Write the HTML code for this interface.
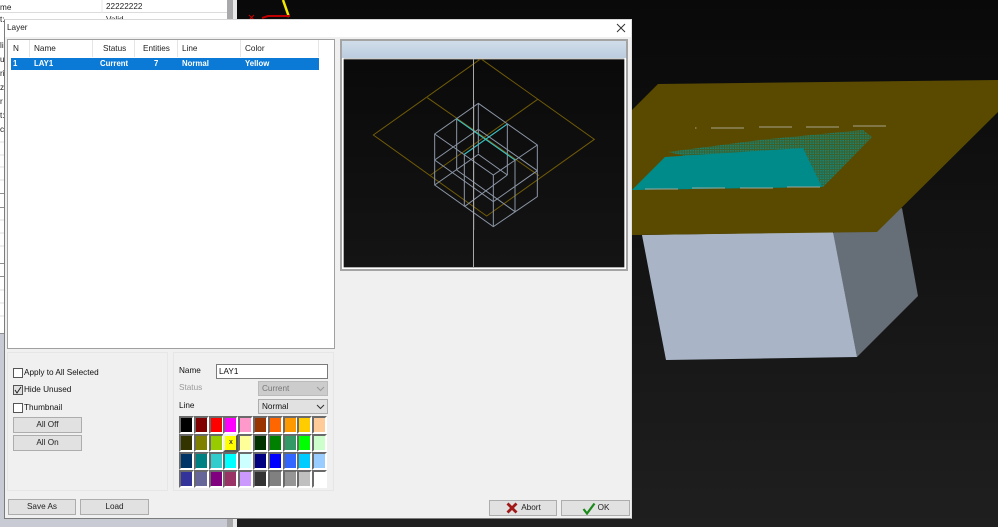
<!DOCTYPE html>
<html><head><meta charset="utf-8"><style>
html,body{margin:0;padding:0;width:998px;height:527px;overflow:hidden;background:#111}
*{box-sizing:border-box}
body{font-family:"Liberation Sans",sans-serif;font-size:8.2px;color:#111;position:relative}
#w{position:absolute;left:0;top:0;width:998px;height:527px;filter:blur(.3px)}
.a{position:absolute;white-space:nowrap}
.btn{position:absolute;background:#e1e1e1;border:1px solid #adadad;text-align:center;color:#222;font-size:8.2px}
.cb{position:absolute;width:10px;height:10px;background:#fff;border:1px solid #555}
.sel{position:absolute;border:1px solid #adadad;background:#e1e1e1;padding-left:3px;font-size:8.2px}
.sw{position:absolute;width:15px;height:18px;border:2px solid;border-color:#6a6a6a #fff #fff #6a6a6a}
.h{position:absolute;top:41px;height:16px;line-height:16px;font-size:8.2px;color:#222}
.r{position:absolute;top:58px;height:12px;line-height:12px;font-size:7.8px;font-weight:bold;color:#fff}
</style></head><body><div id="w">
<svg class="a" style="left:0;top:0" width="998" height="527" viewBox="0 0 998 527">
<defs>
<linearGradient id="bg" x1="0" y1="0" x2="0" y2="1"><stop offset="0" stop-color="#090909"/><stop offset="1" stop-color="#1f1f1f"/></linearGradient>
<linearGradient id="bg2" x1="0" y1="0" x2="0" y2="1"><stop offset="0" stop-color="#0a0a0a"/><stop offset="1" stop-color="#141414"/></linearGradient>
<pattern id="dots" width="2.500" height="2.500" patternUnits="userSpaceOnUse"><rect width="1.500" height="1.500" fill="#0a9090"/></pattern>
<linearGradient id="teal" x1="0" y1="1" x2="0.100" y2="0"><stop offset="0" stop-color="#008b8b"/><stop offset="1" stop-color="#2f6f40"/></linearGradient>
</defs>
<rect x="237" width="761" height="527" fill="url(#bg)"/>
<rect x="0" width="237" height="527" fill="#c9cbd4"/>
<rect x="0" width="227" height="333" fill="#fff"/>
<rect x="227" width="6" height="527" fill="#a9a9ab"/>
<rect x="233" width="4" height="527" fill="#e8e8e8"/>
<path d="M283 0L289 17" stroke="#f4e800" stroke-width="2.500"/>
<path d="M262 18L268 16H290" stroke="#c00000" stroke-width="2" fill="none"/>
<path d="M249 15L254 20M254 15L249 20" stroke="#d00000" stroke-width="1"/>
<polygon points="833,233 902,208 918,296 857,357" fill="#666e78"/>
<polygon points="642,235 833,232 857,357 666,360" fill="#a9b5c6"/>
<polygon points="658,84 998,80 998,112 877,232 632,235 632,110" fill="#5a4a00"/>
<polygon points="668,152 760,140 863,130 872,137 823,187" fill="url(#teal)" opacity=".5"/>
<polygon points="668,152 760,140 863,130 872,137 823,187" fill="url(#dots)" opacity=".7"/>
<polygon points="632,190 665,157 803,148 822,187" fill="#008b8b"/>
<path d="M695 128h1.500M711 128h33M759 127h33M806 127h33M853 126h33" stroke="#a8a28a" stroke-width="1"/>
<path d="M645 189h33M692 188h33M740 188h33M787 187h33" stroke="#9aa89f" stroke-width="1"/>
<g stroke="#dcdcdc"><path d="M0 12.500H227M0 142H4M0 155H4M0 167H4M0 180H4M0 220H4M0 233H4M0 246H4M0 290H4M0 303H4M0 316H4"/></g>
<path d="M0 193.500H4M0 207.500H4M0 263.500H4M0 276.500H4M0 333.500H4" stroke="#8f8f8f"/>
<path d="M102 0V13" stroke="#e8e8e8"/>
</svg>
<div class="a" style="left:0;top:3px;color:#222">me</div>
<div class="a" style="left:106px;top:2px;color:#222">22222222</div>
<div class="a" style="left:106px;top:15px;color:#222">Valid</div>
<div class="a" style="left:0;top:15px;color:#222">t:</div>
<div class="a" style="left:0;top:39px;line-height:14px;color:#222;white-space:pre">li
u
ri
z
r
t:
c</div>

<div class="a" style="left:4px;top:19px;width:628px;height:500px;background:#f0f0f0;border:1px solid #7c7c7c;border-top-color:#d8d8d8;border-right-color:#e0e0e0"></div>
<div class="a" style="left:5px;top:20px;width:626px;height:17px;background:#fff"></div>
<div class="a" style="left:7px;top:23px;color:#222">Layer</div>
<svg class="a" style="left:616px;top:23px" width="10" height="10"><path d="M1 1L9 9M9 1L1 9" stroke="#333" stroke-width="1"/></svg>

<div class="a" style="left:7px;top:39px;width:328px;height:310px;background:#fff;border:1px solid #a0a0a0"></div>
<svg class="a" style="left:8px;top:40px" width="312" height="18"><path d="M21.500 0V17M84.500 0V17M126.500 0V17M169.500 0V17M232.500 0V17M310.500 0V17" stroke="#e5e5e5"/></svg>
<div class="h" style="left:13px">N</div>
<div class="h" style="left:34px">Name</div>
<div class="h" style="left:103px">Status</div>
<div class="h" style="left:143px">Entities</div>
<div class="h" style="left:182px">Line</div>
<div class="h" style="left:245px">Color</div>
<div class="a" style="left:11px;top:58px;width:308px;height:12px;background:#0a7ad6"></div>
<div class="r" style="left:13px">1</div>
<div class="r" style="left:34px">LAY1</div>
<div class="r" style="left:100px">Current</div>
<div class="r" style="left:154px">7</div>
<div class="r" style="left:182px">Normal</div>
<div class="r" style="left:245px">Yellow</div>

<div class="a" style="left:340px;top:39px;width:288px;height:232px;background:#fff;border:2px solid #a4a4a4"></div>
<div class="a" style="left:342px;top:41px;width:284px;height:17px;background:linear-gradient(#d0dce8,#bccde0)"></div>
<svg class="a" style="left:340px;top:30px" width="290" height="245" viewBox="0 0 870 735">
<rect x="11" y="88" width="842" height="624" fill="url(#bg2)"/>
<path d="M11 87H853" stroke="#999" stroke-width="3" fill="none"/>
<path d="M420 88L100 315L440 558L763 328L425 88M262 203L597 437M593 208L272 435" stroke="#6f5a08" stroke-width="3" fill="none"/>
</svg>
<svg class="a" style="left:430px;top:100px" width="110" height="130" viewBox="0 0 330 390">
<g fill="none" stroke-width="3">
<g stroke="#8b95a5">
<path d="M145 10L322 135V290L190 380L14 255V102Z"/>
<path d="M14 102L190 225L322 135"/>
<path d="M14 180L145 88L322 212M14 180L190 305L322 212"/>
<path d="M14 255L145 163L232 225"/>
<path d="M80 210L255 335M103 320L232 225"/>
<path d="M145 10V160M80 57V210M232 72V225M255 180V335M103 163V320M190 225V380"/>
<path d="M80 57L255 180M232 72L103 163"/>
</g>
<path d="M80 57L255 180M232 72L103 163" stroke="#2ec4c4"/>
</g>
<path d="M131 0V390" stroke="#a8a8a8" stroke-width="3"/>
</svg>
<svg class="a" style="left:473px;top:59px" width="2" height="209"><rect width="1" height="209" fill="#a8a8a8"/></svg>

<div class="a" style="left:7px;top:352px;width:161px;height:139px;background:#f0f0f0;border:1px solid #e6e6e6"></div>
<div class="cb" style="left:13px;top:368px"></div>
<div class="a" style="left:24px;top:368px">Apply to All Selected</div>
<div class="cb" style="left:13px;top:385px;background:#e0e0e0"></div>
<svg class="a" style="left:13px;top:385px" width="10" height="10"><path d="M2 5L4 8L8 2" stroke="#222" fill="none"/></svg>
<div class="a" style="left:24px;top:385px">Hide Unused</div>
<div class="cb" style="left:13px;top:403px"></div>
<div class="a" style="left:24px;top:403px">Thumbnail</div>
<div class="btn" style="left:13px;top:417px;width:69px;height:16px;line-height:14px">All Off</div>
<div class="btn" style="left:13px;top:435px;width:69px;height:16px;line-height:14px">All On</div>

<div class="a" style="left:173px;top:352px;width:161px;height:139px;background:#f0f0f0;border:1px solid #e6e6e6"></div>
<div class="a" style="left:179px;top:366px">Name</div>
<div class="a" style="left:216px;top:364px;width:112px;height:15px;background:#fff;border:1px solid #7a7a7a;line-height:13px;padding-left:2px">LAY1</div>
<div class="a" style="left:179px;top:383px;color:#999">Status</div>
<div class="sel" style="left:258px;top:381px;width:70px;height:15px;line-height:13px;background:#ccc;color:#777;border-color:#bbb">Current</div>
<svg class="a" style="left:316px;top:386px" width="9" height="6"><path d="M1 1L4.500 4.500L8 1" stroke="#999" fill="none"/></svg>
<div class="a" style="left:179px;top:401px">Line</div>
<div class="sel" style="left:258px;top:399px;width:70px;height:15px;line-height:13px;color:#111">Normal</div>
<svg class="a" style="left:316px;top:404px" width="9" height="6"><path d="M1 1L4.500 4.500L8 1" stroke="#333" fill="none"/></svg>

<div class="sw" style="left:179px;top:416px;background:#000000"></div>
<div class="sw" style="left:193.800px;top:416px;background:#800000"></div>
<div class="sw" style="left:208.600px;top:416px;background:#ff0000"></div>
<div class="sw" style="left:223.400px;top:416px;background:#ff00ff"></div>
<div class="sw" style="left:238.200px;top:416px;background:#ff99cc"></div>
<div class="sw" style="left:253px;top:416px;background:#993300"></div>
<div class="sw" style="left:267.800px;top:416px;background:#ff6600"></div>
<div class="sw" style="left:282.600px;top:416px;background:#ff9900"></div>
<div class="sw" style="left:297.400px;top:416px;background:#ffcc00"></div>
<div class="sw" style="left:312.200px;top:416px;background:#ffcc99"></div>

<div class="sw" style="left:179px;top:434px;background:#333300"></div>
<div class="sw" style="left:193.800px;top:434px;background:#808000"></div>
<div class="sw" style="left:208.600px;top:434px;background:#99cc00"></div>
<div class="sw" style="left:223.400px;top:434px;background:#ffff00;border-color:#eee #555 #555 #eee"></div>
<div class="sw" style="left:238.200px;top:434px;background:#ffff99"></div>
<div class="sw" style="left:253px;top:434px;background:#003300"></div>
<div class="sw" style="left:267.800px;top:434px;background:#008000"></div>
<div class="sw" style="left:282.600px;top:434px;background:#339966"></div>
<div class="sw" style="left:297.400px;top:434px;background:#00ff00"></div>
<div class="sw" style="left:312.200px;top:434px;background:#ccffcc"></div>
<div class="a" style="left:229px;top:439px;font-size:7px;line-height:8px;color:#445;font-weight:bold">x</div>

<div class="sw" style="left:179px;top:452px;background:#003366"></div>
<div class="sw" style="left:193.800px;top:452px;background:#008080"></div>
<div class="sw" style="left:208.600px;top:452px;background:#33cccc"></div>
<div class="sw" style="left:223.400px;top:452px;background:#00ffff"></div>
<div class="sw" style="left:238.200px;top:452px;background:#ccffff"></div>
<div class="sw" style="left:253px;top:452px;background:#000080"></div>
<div class="sw" style="left:267.800px;top:452px;background:#0000ff"></div>
<div class="sw" style="left:282.600px;top:452px;background:#3366ff"></div>
<div class="sw" style="left:297.400px;top:452px;background:#00ccff"></div>
<div class="sw" style="left:312.200px;top:452px;background:#99ccff"></div>

<div class="sw" style="left:179px;top:470px;background:#333399"></div>
<div class="sw" style="left:193.800px;top:470px;background:#666699"></div>
<div class="sw" style="left:208.600px;top:470px;background:#800080"></div>
<div class="sw" style="left:223.400px;top:470px;background:#993366"></div>
<div class="sw" style="left:238.200px;top:470px;background:#cc99ff"></div>
<div class="sw" style="left:253px;top:470px;background:#333333"></div>
<div class="sw" style="left:267.800px;top:470px;background:#808080"></div>
<div class="sw" style="left:282.600px;top:470px;background:#969696"></div>
<div class="sw" style="left:297.400px;top:470px;background:#c0c0c0"></div>
<div class="sw" style="left:312.200px;top:470px;background:#ffffff"></div>

<div class="btn" style="left:8px;top:499px;width:68px;height:16px;line-height:14px">Save As</div>
<div class="btn" style="left:80px;top:499px;width:69px;height:16px;line-height:14px">Load</div>
<div class="btn" style="left:489px;top:500px;width:68px;height:16px;line-height:14px;padding-left:16px">Abort</div>
<div class="btn" style="left:561px;top:500px;width:69px;height:16px;line-height:14px;padding-left:16px">OK</div>
<svg class="a" style="left:506px;top:502px" width="12" height="12"><path d="M1.500 1.500L10.500 10.500M10.500 1.500L1.500 10.500" stroke="#a01818" stroke-width="2.800"/></svg>
<svg class="a" style="left:582px;top:502px" width="14" height="13"><path d="M1.500 7L5 11.500L12.500 1.500" stroke="#1a8a1a" stroke-width="2.200" fill="none"/></svg>
</div></body></html>
